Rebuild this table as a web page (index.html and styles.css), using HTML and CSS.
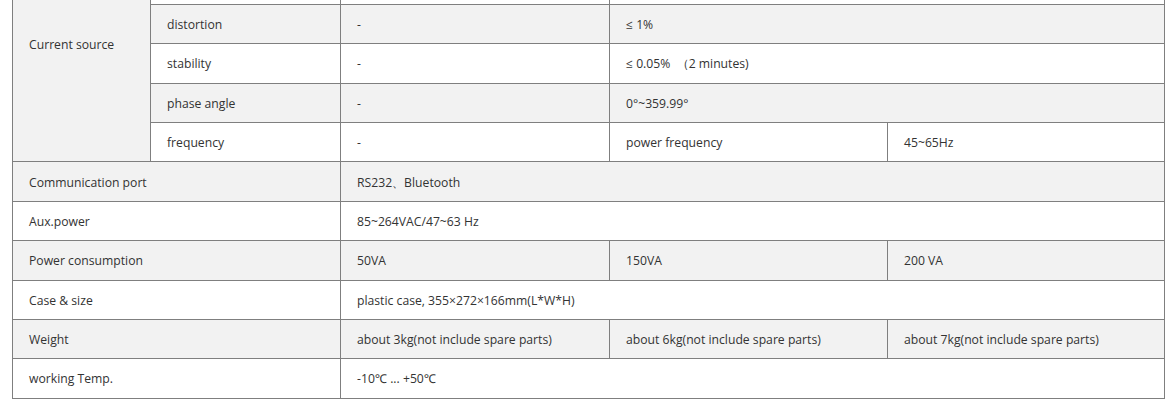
FILE: index.html
```html
<!DOCTYPE html>
<html lang="en">
<head>
<meta charset="utf-8">
<title>Specifications</title>
<link rel="stylesheet" href="styles.css">
</head>
<body>
<div class="wrap">
<table class="spec">
  <colgroup>
    <col class="c1"><col class="c2"><col class="c3"><col class="c4"><col class="c5">
  </colgroup>
  <tbody>
    <tr>
      <td rowspan="6">Current source</td>
      <td></td>
      <td></td>
      <td colspan="2"></td>
    </tr>
    <tr>
      <td></td>
      <td></td>
      <td colspan="2"></td>
    </tr>
    <tr>
      <td>distortion</td>
      <td>-</td>
      <td colspan="2">≤ 1%</td>
    </tr>
    <tr>
      <td>stability</td>
      <td>-</td>
      <td colspan="2">≤ 0.05% &nbsp;（2 minutes)</td>
    </tr>
    <tr>
      <td>phase angle</td>
      <td>-</td>
      <td colspan="2">0°~359.99°</td>
    </tr>
    <tr>
      <td>frequency</td>
      <td>-</td>
      <td>power frequency</td>
      <td>45~65Hz</td>
    </tr>
    <tr>
      <td colspan="2">Communication port</td>
      <td colspan="3">RS232、Bluetooth</td>
    </tr>
    <tr>
      <td colspan="2">Aux.power</td>
      <td colspan="3">85~264VAC/47~63 Hz</td>
    </tr>
    <tr>
      <td colspan="2">Power consumption</td>
      <td>50VA</td>
      <td>150VA</td>
      <td>200 VA</td>
    </tr>
    <tr>
      <td colspan="2">Case &amp; size</td>
      <td colspan="3">plastic case, 355×272×166mm(L*W*H)</td>
    </tr>
    <tr>
      <td colspan="2">Weight</td>
      <td>about 3kg(not include spare parts)</td>
      <td>about 6kg(not include spare parts)</td>
      <td>about 7kg(not include spare parts)</td>
    </tr>
    <tr>
      <td colspan="2">working Temp.</td>
      <td colspan="3">-10℃ ... +50℃</td>
    </tr>
  </tbody>
</table>
</div>
</body>
</html>
```
FILE: styles.css
```css
html, body {
  margin: 0;
  padding: 0;
  background: #ffffff;
}
body {
  overflow: hidden;
}
.wrap {
  padding-left: 12px;
}
.spec {
  border-collapse: collapse;
  table-layout: fixed;
  width: 1152px;
  margin-top: -75px;
  font-family: "Open Sans", "Noto Sans", sans-serif;
  font-size: 12.2px;
  color: #333333;
}
.c1 { width: 138px; }
.c2 { width: 190px; }
.c3 { width: 269px; }
.c4 { width: 278px; }
.c5 { width: 277px; }
.spec tr {
  height: 39.4px;
}
.spec tr:nth-child(odd) {
  background: #f2f2f2;
}
.spec tr:nth-child(even) {
  background: #ffffff;
}
.spec td {
  border: 1px solid #7f7f7f;
  padding: 2px 16px 0;
  text-align: left;
  vertical-align: middle;
  line-height: 20px;
  white-space: nowrap;
}
```
